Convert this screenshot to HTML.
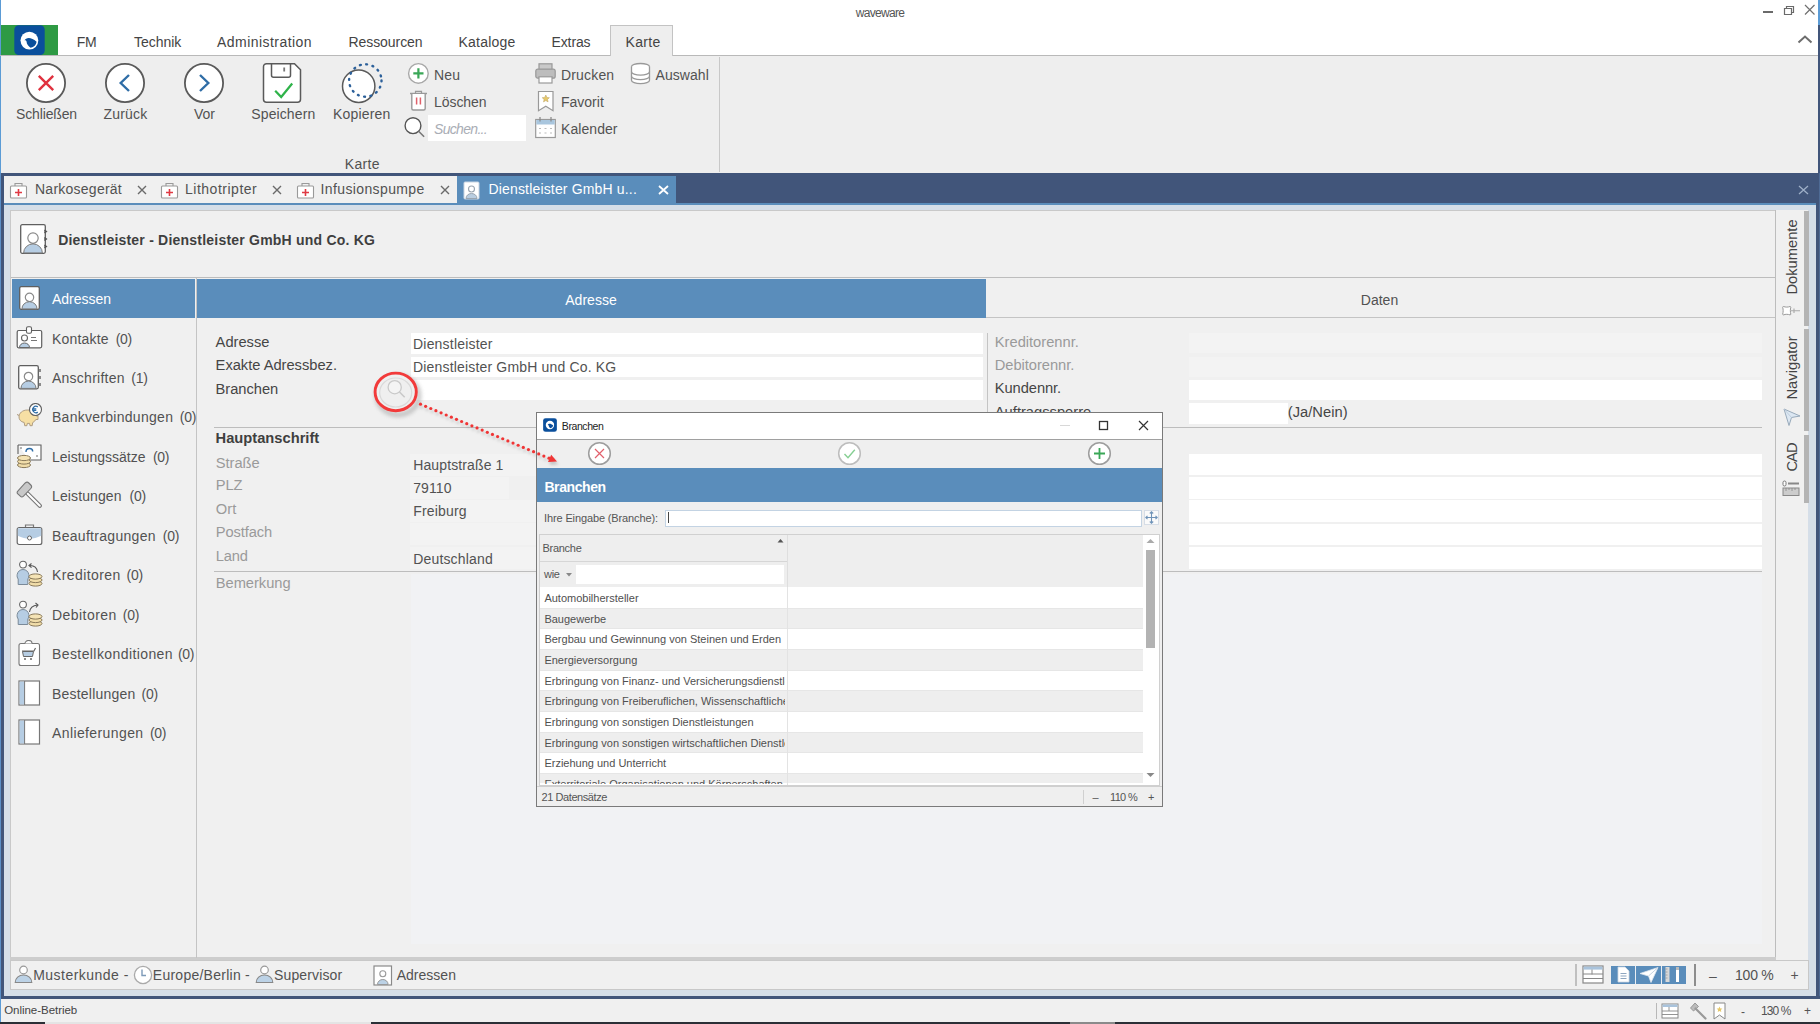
<!DOCTYPE html>
<html><head><meta charset="utf-8"><title>waveware</title>
<style>
html,body{margin:0;padding:0;}
body{width:1820px;height:1024px;overflow:hidden;position:relative;background:#f0f0f0;font-family:"Liberation Sans",sans-serif;}
.a{position:absolute;}
.t{position:absolute;white-space:pre;font-family:"Liberation Sans",sans-serif;}

</style></head><body>
<div class="a" style="left:0px;top:0px;width:1820px;height:55px;background:#ffffff;"></div>
<div class="a" style="left:1818px;top:0px;width:2px;height:25px;background:#5b9bd5;"></div>
<div class="a" style="left:0px;top:0px;width:1px;height:173px;background:#5b9bd5;"></div>
<div class="t" style="left:855.75px;top:6.54px;font-size:12px;line-height:12px;color:#555;letter-spacing:-0.691px;">waveware</div>
<div class="a" style="left:1763px;top:10.5px;width:10px;height:2.5px;background:#6a6a6a;"></div>
<svg class="a" style="left:1782px;top:3px;" width="14" height="13" viewBox="0 0 14 13"><path d="M2.5 5.5h7v6h-7z M4.5 5.5v-2h7v6h-2" fill="none" stroke="#6a6a6a" stroke-width="1.2"/></svg>
<svg class="a" style="left:1803px;top:3px;" width="14" height="13" viewBox="0 0 14 13"><path d="M2 2l9.5 9.5M11.5 2L2 11.5" stroke="#6f6f6f" stroke-width="1.2"/></svg>
<svg class="a" style="left:1796px;top:33px;" width="18" height="12" viewBox="0 0 18 12"><path d="M2.5 9.5L9 3.5l6.5 6" fill="none" stroke="#6d6d6d" stroke-width="2"/></svg>
<div class="a" style="left:1px;top:25px;width:57px;height:30px;background:#2e9a44;"></div>
<svg class="a" style="left:14px;top:25px;" width="31" height="30" viewBox="0 0 31 30"><rect x="0.3" y="0.3" width="30.4" height="29.7" rx="4.5" fill="#0a4f9c"/><circle cx="15.4" cy="15.6" r="8.9" fill="#fff"/><path d="M10.4 15.4C12 12.3 17.2 11.6 22.6 16.8A7.3 7.3 0 0 1 16.6 22.8C14.4 21.3 12.6 19.2 12.6 16.8C12.6 15.6 11.4 15 10.4 15.4Z" fill="#0a4f9c"/></svg>
<div class="t" style="left:76.70px;top:34.55px;font-size:14px;line-height:14px;color:#444;letter-spacing:-0.359px;">FM</div>
<div class="t" style="left:134.00px;top:34.55px;font-size:14px;line-height:14px;color:#444;letter-spacing:-0.038px;">Technik</div>
<div class="t" style="left:217.00px;top:34.55px;font-size:14px;line-height:14px;color:#444;letter-spacing:0.450px;">Administration</div>
<div class="t" style="left:348.50px;top:34.55px;font-size:14px;line-height:14px;color:#444;letter-spacing:-0.070px;">Ressourcen</div>
<div class="t" style="left:458.50px;top:34.55px;font-size:14px;line-height:14px;color:#444;letter-spacing:0.215px;">Kataloge</div>
<div class="t" style="left:551.50px;top:34.55px;font-size:14px;line-height:14px;color:#444;letter-spacing:-0.115px;">Extras</div>
<div class="t" style="left:625.50px;top:34.55px;font-size:14px;line-height:14px;color:#444;letter-spacing:0.306px;">Karte</div>
<div class="a" style="left:0px;top:55px;width:1818px;height:1px;background:#b9b9b9;"></div>
<div class="a" style="left:610px;top:25px;width:63px;height:31px;background:#eeeeee;border:1px solid #c3c3c3;box-sizing:border-box;border-bottom:none;"></div>
<div class="t" style="left:625.50px;top:34.55px;font-size:14px;line-height:14px;color:#444;letter-spacing:0.306px;">Karte</div>
<div class="a" style="left:1px;top:56px;width:1817px;height:117px;background:#eeeeee;"></div>
<div class="a" style="left:719px;top:57px;width:1px;height:115px;background:#c8c8c8;"></div>
<svg class="a" style="left:25px;top:62px;" width="42" height="42" viewBox="0 0 42 42"><circle cx="21" cy="21" r="19.1" fill="#fff" stroke="#5a5a5a" stroke-width="1.8"/><path d="M13.8 13.8l14.4 14.4M28.2 13.8l-14.4 14.4" stroke="#e0323f" stroke-width="2.4"/></svg>
<svg class="a" style="left:104px;top:62px;" width="42" height="42" viewBox="0 0 42 42"><circle cx="21" cy="21" r="19.1" fill="#fff" stroke="#5a5a5a" stroke-width="1.8"/><path d="M25 13l-8.3 8 8.3 8" fill="none" stroke="#2f6da6" stroke-width="2.4"/></svg>
<svg class="a" style="left:183.4px;top:62.3px;" width="42" height="42" viewBox="0 0 42 42"><circle cx="21" cy="21" r="19.1" fill="#fff" stroke="#5a5a5a" stroke-width="1.8"/><path d="M17 13l8.3 8-8.3 8" fill="none" stroke="#2f6da6" stroke-width="2.4"/></svg>
<svg class="a" style="left:262px;top:62px;" width="42" height="42" viewBox="0 0 42 42"><path d="M4.5 1.7h28l6 6v29.5a3 3 0 0 1-3 3h-31a3 3 0 0 1-3-3v-32.5a3 3 0 0 1 3-3z" fill="#fff" stroke="#5a5a5a" stroke-width="1.5"/><path d="M9.5 1.7v11.5a2 2 0 0 0 2 2h15a2 2 0 0 0 2-2v-11.5" fill="none" stroke="#5a5a5a" stroke-width="1.5"/><rect x="21.3" y="5.5" width="1.8" height="4" fill="#777"/><path d="M13.2 28.7l6 6.3 11-13.5" fill="none" stroke="#2fb34a" stroke-width="2.2"/></svg>
<svg class="a" style="left:338px;top:60px;" width="48" height="46" viewBox="0 0 48 46"><circle cx="20.7" cy="26.2" r="16.2" fill="#fff" stroke="#5a5a5a" stroke-width="1.5"/><circle cx="27.3" cy="20.5" r="16.2" fill="none" stroke="#2c609a" stroke-width="2.4" stroke-dasharray="0.9 5.5" stroke-linecap="round"/></svg>
<div class="t" style="left:16.00px;top:107.35px;font-size:14px;line-height:14px;color:#525252;letter-spacing:-0.141px;">Schließen</div>
<div class="t" style="left:103.50px;top:107.35px;font-size:14px;line-height:14px;color:#525252;letter-spacing:0.201px;">Zurück</div>
<div class="t" style="left:194.00px;top:107.35px;font-size:14px;line-height:14px;color:#525252;letter-spacing:-0.005px;">Vor</div>
<div class="t" style="left:251.30px;top:107.35px;font-size:14px;line-height:14px;color:#525252;letter-spacing:0.106px;">Speichern</div>
<div class="t" style="left:333.00px;top:107.35px;font-size:14px;line-height:14px;color:#525252;letter-spacing:0.169px;">Kopieren</div>
<svg class="a" style="left:407px;top:62px;" width="23" height="23" viewBox="0 0 23 23"><circle cx="11.4" cy="11.4" r="9.8" fill="#fff" stroke="#a8a8a8" stroke-width="1.4"/><path d="M11.4 6.3v10.2M6.3 11.4h10.2" stroke="#3aa757" stroke-width="2.2"/></svg>
<div class="t" style="left:434.00px;top:67.65px;font-size:14px;line-height:14px;color:#525252;letter-spacing:0.204px;">Neu</div>
<svg class="a" style="left:407px;top:89px;" width="23" height="23" viewBox="0 0 23 23"><path d="M3 4.5h17" stroke="#999" stroke-width="1.5"/><path d="M8.5 4.3v-2h6v2" fill="none" stroke="#999" stroke-width="1.2"/><path d="M4.8 5v14.5a1.5 1.5 0 0 0 1.5 1.5h10.4a1.5 1.5 0 0 0 1.5-1.5v-14.5" fill="#fff" stroke="#999" stroke-width="1.4"/><path d="M9.6 8.5v7M13.4 8.5v7" stroke="#e0606a" stroke-width="1.5"/></svg>
<div class="t" style="left:434.00px;top:95.15px;font-size:14px;line-height:14px;color:#525252;letter-spacing:-0.062px;">Löschen</div>
<svg class="a" style="left:403px;top:116px;" width="24" height="24" viewBox="0 0 24 24"><circle cx="10" cy="9.7" r="7.9" fill="#fff" stroke="#555" stroke-width="1.4"/><path d="M15.6 15.3l5.5 5.4" stroke="#777" stroke-width="1.6"/></svg>
<div class="a" style="left:428px;top:115px;width:98px;height:26px;background:#ffffff;"></div>
<div class="t" style="left:434.00px;top:121.75px;font-size:14px;line-height:14px;color:#a9adb5;font-style:italic;letter-spacing:-0.684px;">Suchen...</div>
<svg class="a" style="left:534px;top:62px;" width="23" height="23" viewBox="0 0 23 23"><rect x="5" y="1.8" width="13" height="6" fill="#c9c9c9" stroke="#999" stroke-width="1.2"/><rect x="1.8" y="7.2" width="19.4" height="9" rx="2" fill="#bdbdbd" stroke="#999" stroke-width="1.2"/><rect x="5" y="14.8" width="13" height="6.2" fill="#fff" stroke="#999" stroke-width="1.2"/></svg>
<div class="t" style="left:561.00px;top:67.55px;font-size:14px;line-height:14px;color:#525252;letter-spacing:0.166px;">Drucken</div>
<svg class="a" style="left:536px;top:90px;" width="20" height="23" viewBox="0 0 20 23"><path d="M2.5 1.5h14.5v19.2l-7.2-4.5-7.3 4.5z" fill="#fff" stroke="#999" stroke-width="1.2"/><path d="M9.8 5l1.1 2.4 2.5.3-1.9 1.7.6 2.5-2.3-1.3-2.3 1.3.6-2.5-1.9-1.7 2.5-.3z" fill="#e6c86a" stroke="#bba060" stroke-width=".5"/></svg>
<div class="t" style="left:561.00px;top:94.55px;font-size:14px;line-height:14px;color:#525252;">Favorit</div>
<svg class="a" style="left:534px;top:116px;" width="23" height="23" viewBox="0 0 23 23"><rect x="1.7" y="3.5" width="19.6" height="18" fill="#fff" stroke="#999" stroke-width="1.2"/><rect x="2.3" y="4" width="18.4" height="4.5" fill="#a9c6de"/><path d="M6 1v4.5M17 1v4.5" stroke="#888" stroke-width="1.2"/><path d="M5 12.5h2M10.5 12.5h2M16 12.5h2M5 17h2M10.5 17h2M16 17h2" stroke="#bbb" stroke-width="1.2"/></svg>
<div class="t" style="left:561.00px;top:121.75px;font-size:14px;line-height:14px;color:#525252;letter-spacing:0.069px;">Kalender</div>
<svg class="a" style="left:629px;top:62px;" width="23" height="23" viewBox="0 0 23 23"><ellipse cx="11.5" cy="4.8" rx="9" ry="3.3" fill="#fff" stroke="#999" stroke-width="1.3"/><path d="M2.5 4.8v13.5c0 1.8 4 3.3 9 3.3s9-1.5 9-3.3v-13.5" fill="#fff" stroke="#999" stroke-width="1.3"/><path d="M2.5 9.8c0 1.8 4 3.3 9 3.3s9-1.5 9-3.3M2.5 14.3c0 1.8 4 3.3 9 3.3s9-1.5 9-3.3" fill="none" stroke="#999" stroke-width="1.3"/></svg>
<div class="t" style="left:655.50px;top:67.55px;font-size:14px;line-height:14px;color:#525252;letter-spacing:0.054px;">Auswahl</div>
<div class="t" style="left:344.80px;top:157.15px;font-size:14px;line-height:14px;color:#525252;letter-spacing:0.306px;">Karte</div>
<div class="a" style="left:1px;top:173px;width:1817px;height:30px;background:#41557a;"></div>
<div class="a" style="left:4px;top:176px;width:453px;height:27px;background:#f0f0f0;"></div>
<div class="a" style="left:457px;top:176px;width:219px;height:27px;background:#5a8dbb;"></div>
<div class="a" style="left:4px;top:203px;width:1812px;height:2px;background:#5a8dbb;"></div>
<div class="a" style="left:1px;top:173px;width:3px;height:826px;background:#41557a;"></div>
<div class="a" style="left:0px;top:173px;width:1px;height:826px;background:#5b8fc8;"></div>
<div class="a" style="left:1818px;top:25px;width:2px;height:148px;background:#41557a;"></div>
<div class="a" style="left:1816px;top:173px;width:4px;height:826px;background:#41557a;"></div>
<div class="a" style="left:1819px;top:173px;width:1px;height:826px;background:#4e6a94;"></div>
<div class="a" style="left:4px;top:205px;width:1812px;height:5px;background:#d5dee8;"></div>
<div class="a" style="left:4px;top:205px;width:6px;height:791px;background:#d5dee8;"></div>
<div class="a" style="left:1808px;top:205px;width:8px;height:791px;background:#d5dee8;"></div>
<div class="a" style="left:4px;top:989px;width:1812px;height:7px;background:#d5dee8;"></div>
<div class="a" style="left:1px;top:996px;width:1819px;height:3px;background:#41557a;"></div>
<svg class="a" style="left:8.5px;top:181px;" width="19" height="18" viewBox="0 0 19 18"><rect x="1.5" y="5" width="16" height="12" rx="1" fill="#fff" stroke="#9a9a9a" stroke-width="1.1"/><path d="M6 5v-2.5h7v2.5" fill="none" stroke="#9a9a9a" stroke-width="1.1"/><path d="M9.5 8v7M6 11.5h7" stroke="#e03a44" stroke-width="1.6"/></svg>
<div class="t" style="left:35.00px;top:181.75px;font-size:14px;line-height:14px;color:#525252;letter-spacing:0.246px;">Narkosegerät</div>
<svg class="a" style="left:136.5px;top:184.5px;" width="10" height="10" viewBox="0 0 10 10"><path d="M1 1l8 8M9 1l-8 8" stroke="#6a6a6a" stroke-width="1.4"/></svg>
<svg class="a" style="left:159.5px;top:181px;" width="19" height="18" viewBox="0 0 19 18"><rect x="1.5" y="5" width="16" height="12" rx="1" fill="#fff" stroke="#9a9a9a" stroke-width="1.1"/><path d="M6 5v-2.5h7v2.5" fill="none" stroke="#9a9a9a" stroke-width="1.1"/><path d="M9.5 8v7M6 11.5h7" stroke="#e03a44" stroke-width="1.6"/></svg>
<div class="t" style="left:185.00px;top:181.75px;font-size:14px;line-height:14px;color:#525252;letter-spacing:0.512px;">Lithotripter</div>
<svg class="a" style="left:272px;top:184.5px;" width="10" height="10" viewBox="0 0 10 10"><path d="M1 1l8 8M9 1l-8 8" stroke="#6a6a6a" stroke-width="1.4"/></svg>
<svg class="a" style="left:295.5px;top:181px;" width="19" height="18" viewBox="0 0 19 18"><rect x="1.5" y="5" width="16" height="12" rx="1" fill="#fff" stroke="#9a9a9a" stroke-width="1.1"/><path d="M6 5v-2.5h7v2.5" fill="none" stroke="#9a9a9a" stroke-width="1.1"/><path d="M9.5 8v7M6 11.5h7" stroke="#e03a44" stroke-width="1.6"/></svg>
<div class="t" style="left:320.50px;top:181.75px;font-size:14px;line-height:14px;color:#525252;letter-spacing:0.383px;">Infusionspumpe</div>
<svg class="a" style="left:439.7px;top:184.5px;" width="10" height="10" viewBox="0 0 10 10"><path d="M1 1l8 8M9 1l-8 8" stroke="#6a6a6a" stroke-width="1.4"/></svg>
<svg class="a" style="left:463px;top:181px;" width="17" height="19" viewBox="0 0 17 19"><rect x="1" y="1" width="15" height="17" rx="1" fill="#fff" stroke="#c9d5e2" stroke-width="1"/><circle cx="8.5" cy="8" r="3" fill="none" stroke="#9aa5b0" stroke-width="1.1"/><path d="M3 17.5c0-3 2.5-5 5.5-5s5.5 2 5.5 5z" fill="#b9cde0" stroke="#9aa5b0" stroke-width="1"/></svg>
<div class="t" style="left:488.50px;top:181.75px;font-size:14px;line-height:14px;color:#ffffff;letter-spacing:0.164px;">Dienstleister GmbH u...</div>
<svg class="a" style="left:658px;top:184.5px;" width="11" height="10" viewBox="0 0 11 10"><path d="M1 1l9 8M10 1l-9 8" stroke="#ffffff" stroke-width="1.8"/></svg>
<svg class="a" style="left:1798px;top:184.5px;" width="11" height="10" viewBox="0 0 11 10"><path d="M1 1l9 8M10 1l-9 8" stroke="#9fb0c8" stroke-width="1.3"/></svg>
<div class="a" style="left:10px;top:210px;width:1766px;height:748px;background:#f0f0f0;"></div>
<div class="a" style="left:10px;top:210px;width:1px;height:748px;background:#c9c9c9;"></div>
<div class="a" style="left:10px;top:210px;width:1766px;height:1px;background:#c9c9c9;"></div>
<div class="a" style="left:1775px;top:210px;width:1px;height:748px;background:#bdbdbd;"></div>
<div class="a" style="left:10px;top:957px;width:1766px;height:3px;background:#cdcdcd;"></div>
<div class="a" style="left:1776px;top:210px;width:32px;height:750px;background:#f0f0f0;"></div>
<svg class="a" style="left:19.5px;top:224px;" width="26" height="30" viewBox="0 0 26 30"><rect x="0.7" y="0.7" width="24.6" height="28.6" rx="1.5" fill="#fff" stroke="#5f5f5f" stroke-width="1.3"/><circle cx="13.0" cy="14.1" r="5.2" fill="#fff" stroke="#8a8a8a" stroke-width="1.2"/><path d="M3.6400000000000006 28.9a9.36 9.0 0 0 1 18.72 0z" fill="#b6cde3" stroke="#7a7a7a" stroke-width="1"/></svg>
<svg class="a" style="left:44px;top:226px;" width="4" height="26" viewBox="0 0 4 26"><path d="M0.5 4l2 1.5-2 1.5M0.5 11.5l2 1.5-2 1.5M0.5 19l2 1.5-2 1.5" fill="#555" stroke="#555" stroke-width="1.2"/></svg>
<div class="t" style="left:58.20px;top:232.75px;font-size:14px;line-height:14px;color:#3f3f3f;font-weight:700;letter-spacing:0.216px;">Dienstleister - Dienstleister GmbH und Co. KG</div>
<div class="a" style="left:11px;top:277px;width:1764px;height:1px;background:#bdbdbd;"></div>
<div class="a" style="left:12px;top:279px;width:183px;height:39px;background:#5a8dbb;"></div>
<div class="a" style="left:196px;top:278px;width:1px;height:680px;background:#c4c4c4;"></div>
<svg class="a" style="left:18.5px;top:286px;" width="21" height="24" viewBox="0 0 21 24"><rect x="0.7" y="0.7" width="19.6" height="22.6" rx="1.5" fill="#fff" stroke="#5f5f5f" stroke-width="1.3"/><circle cx="10.5" cy="11.28" r="4.2" fill="#fff" stroke="#8a8a8a" stroke-width="1.2"/><path d="M2.9400000000000004 22.9a7.56 7.199999999999999 0 0 1 15.12 0z" fill="#b6cde3" stroke="#7a7a7a" stroke-width="1"/></svg>
<div class="t" style="left:52.00px;top:292.05px;font-size:14px;line-height:14px;color:#ffffff;letter-spacing:-0.020px;">Adressen</div>
<div class="t" style="left:52.00px;top:331.55px;font-size:14px;line-height:14px;color:#525252;letter-spacing:0.179px;">Kontakte</div>
<div class="t" style="left:115.70px;top:331.55px;font-size:14px;line-height:14px;color:#525252;letter-spacing:-0.308px;">(0)</div>
<div class="t" style="left:52.00px;top:371.00px;font-size:14px;line-height:14px;color:#525252;letter-spacing:0.250px;">Anschriften</div>
<div class="t" style="left:131.30px;top:371.00px;font-size:14px;line-height:14px;color:#525252;letter-spacing:-0.308px;">(1)</div>
<div class="t" style="left:52.00px;top:410.45px;font-size:14px;line-height:14px;color:#525252;letter-spacing:0.277px;">Bankverbindungen</div>
<div class="t" style="left:179.80px;top:410.45px;font-size:14px;line-height:14px;color:#525252;letter-spacing:-0.308px;">(0)</div>
<div class="t" style="left:52.00px;top:449.90px;font-size:14px;line-height:14px;color:#525252;letter-spacing:0.007px;">Leistungssätze</div>
<div class="t" style="left:152.90px;top:449.90px;font-size:14px;line-height:14px;color:#525252;letter-spacing:-0.308px;">(0)</div>
<div class="t" style="left:52.00px;top:489.35px;font-size:14px;line-height:14px;color:#525252;letter-spacing:0.118px;">Leistungen</div>
<div class="t" style="left:129.60px;top:489.35px;font-size:14px;line-height:14px;color:#525252;letter-spacing:-0.308px;">(0)</div>
<div class="t" style="left:52.00px;top:528.80px;font-size:14px;line-height:14px;color:#525252;letter-spacing:0.297px;">Beauftragungen</div>
<div class="t" style="left:162.80px;top:528.80px;font-size:14px;line-height:14px;color:#525252;letter-spacing:-0.308px;">(0)</div>
<div class="t" style="left:52.00px;top:568.25px;font-size:14px;line-height:14px;color:#525252;letter-spacing:0.411px;">Kreditoren</div>
<div class="t" style="left:126.60px;top:568.25px;font-size:14px;line-height:14px;color:#525252;letter-spacing:-0.308px;">(0)</div>
<div class="t" style="left:52.00px;top:607.70px;font-size:14px;line-height:14px;color:#525252;letter-spacing:0.444px;">Debitoren</div>
<div class="t" style="left:122.80px;top:607.70px;font-size:14px;line-height:14px;color:#525252;letter-spacing:-0.308px;">(0)</div>
<div class="t" style="left:52.00px;top:647.15px;font-size:14px;line-height:14px;color:#525252;letter-spacing:0.409px;">Bestellkonditionen</div>
<div class="t" style="left:178.00px;top:647.15px;font-size:14px;line-height:14px;color:#525252;letter-spacing:-0.308px;">(0)</div>
<div class="t" style="left:52.00px;top:686.60px;font-size:14px;line-height:14px;color:#525252;letter-spacing:0.204px;">Bestellungen</div>
<div class="t" style="left:141.60px;top:686.60px;font-size:14px;line-height:14px;color:#525252;letter-spacing:-0.308px;">(0)</div>
<div class="t" style="left:52.00px;top:726.05px;font-size:14px;line-height:14px;color:#525252;letter-spacing:0.392px;">Anlieferungen</div>
<div class="t" style="left:150.00px;top:726.05px;font-size:14px;line-height:14px;color:#525252;letter-spacing:-0.308px;">(0)</div>
<svg class="a" style="left:16px;top:326px;" width="27" height="23" viewBox="0 0 27 23"><rect x="1.2" y="4.5" width="24.5" height="17.3" rx="1.5" fill="#fff" stroke="#5f5f5f" stroke-width="1.2"/><rect x="10.5" y="0.8" width="5" height="6.5" rx="1.5" fill="#fff" stroke="#5f5f5f" stroke-width="1.1"/><circle cx="8.5" cy="12" r="3" fill="#fff" stroke="#666" stroke-width="1.1"/><path d="M3.5 21.5a5 4.5 0 0 1 10 0z" fill="#b6cde3" stroke="#666" stroke-width="1"/><path d="M15 11.5h5M15 14.5h6" stroke="#777" stroke-width="1.2"/></svg>
<svg class="a" style="left:18.3px;top:365px;" width="21" height="24.5" viewBox="0 0 21 24.5"><rect x="0.7" y="0.7" width="19.6" height="23.1" rx="1.5" fill="#fff" stroke="#5f5f5f" stroke-width="1.3"/><circle cx="10.5" cy="11.514999999999999" r="4.2" fill="#fff" stroke="#8a8a8a" stroke-width="1.2"/><path d="M2.9400000000000004 23.4a7.56 7.35 0 0 1 15.12 0z" fill="#b6cde3" stroke="#7a7a7a" stroke-width="1"/></svg>
<svg class="a" style="left:39px;top:367px;" width="3" height="22" viewBox="0 0 3 22"><path d="M1 2v3M1 9v3M1 16v3" stroke="#555" stroke-width="1.3"/></svg>
<svg class="a" style="left:16px;top:403px;" width="27" height="26" viewBox="0 0 27 26"><path d="M3 14c0-4 3.5-7 8.5-7 1 0 2 .1 3 .4l2.5-2.2.3 3.3c1.6 1.2 2.7 2.8 2.9 4.5h1.8v3.5h-2.2c-.7 1.4-1.8 2.5-3.2 3.2l-.4 3h-2.2l-.4-2.3c-.8.1-1.5.1-2.3 0l-.4 2.3h-2.2l-.5-3.2C4.6 18.8 3 16.5 3 14z" fill="#f6dfa4" stroke="#a8957a" stroke-width=".9"/><path d="M3.2 12.5l-2.2-1" stroke="#a8957a" stroke-width="1"/><circle cx="19.5" cy="6.5" r="6" fill="#fff" stroke="#5f5f5f" stroke-width="1.1"/><path d="M21.8 3.9a3.2 3.2 0 1 0 0 5.2M16.3 5.8h4M16.3 7.3h4" fill="none" stroke="#2f6da6" stroke-width="1.3"/></svg>
<svg class="a" style="left:16px;top:443px;" width="27" height="27" viewBox="0 0 27 27"><path d="M2 2h23v15h-12" fill="#fff" stroke="#5f5f5f" stroke-width="1.1"/><path d="M2 2v9" stroke="#5f5f5f" stroke-width="1.1"/><path d="M10 9c0-2.2 1.7-3.5 3.5-3.5s3.2 1.2 3.2 3" fill="none" stroke="#2f6da6" stroke-width="1.4"/><circle cx="5" cy="5" r=".8" fill="#555"/><circle cx="21" cy="13" r=".8" fill="#555"/><ellipse cx="8" cy="22" rx="6.5" ry="2.6" fill="#f0dca8" stroke="#8a7a5a" stroke-width="1"/><ellipse cx="8" cy="18.5" rx="6.5" ry="2.6" fill="#f0dca8" stroke="#8a7a5a" stroke-width="1"/><ellipse cx="8" cy="15" rx="6.5" ry="2.6" fill="#f4e3b5" stroke="#8a7a5a" stroke-width="1"/></svg>
<svg class="a" style="left:16px;top:481px;" width="27" height="27" viewBox="0 0 27 27"><path d="M11.5 12.5l12.3 12.3" stroke="#777" stroke-width="4.2" stroke-linecap="round"/><path d="M11.5 12.5l12.3 12.3" stroke="#fff" stroke-width="2" stroke-linecap="round"/><path d="M1.8 10.2L9.2 2c1.2-1 2.6-1 3.6 0l2 2c1 1 1 2.4 0 3.5L7.5 15.2c-1 .9-2.3.9-3.2 0l-2.5-2.3c-.9-.8-.9-2 0-2.7z" fill="#c8c8c8" stroke="#777" stroke-width="1.1"/></svg>
<svg class="a" style="left:16px;top:523px;" width="27" height="23" viewBox="0 0 27 23"><path d="M9.5 4.5v-2.5h8v2.5" fill="none" stroke="#777" stroke-width="1.2"/><rect x="1.2" y="4.5" width="24.6" height="17" rx="2" fill="#fff" stroke="#666" stroke-width="1.2"/><path d="M1.8 5.2h23.4v7.5c-4 2-8 3-11.7 3s-7.7-1-11.7-3z" fill="#b6cde3"/><circle cx="13.5" cy="15" r="2" fill="#fff" stroke="#666" stroke-width="1"/></svg>
<svg class="a" style="left:16px;top:560px;" width="27" height="27" viewBox="0 0 27 27"><circle cx="7" cy="4.6" r="3.4" fill="#fff" stroke="#666" stroke-width="1.1"/><path d="M2.2 24.5v-5.5c-1-1.2-1.3-2.8-1-4.5.5-3 2.8-5 5.8-5s5.3 2 5.8 5c.3 1.7 0 3.3-1 4.5v5.5z" fill="#b6cde3" stroke="#7a8a99" stroke-width="1"/><ellipse cx="19.5" cy="23.5" rx="6.5" ry="2.6" fill="#f0dca8" stroke="#8a7a5a" stroke-width="1"/><ellipse cx="19.5" cy="20.0" rx="6.5" ry="2.6" fill="#f0dca8" stroke="#8a7a5a" stroke-width="1"/><ellipse cx="19.5" cy="16.5" rx="6.5" ry="2.6" fill="#f4e3b5" stroke="#8a7a5a" stroke-width="1"/><path d="M21.5 12c-.5-4-3.5-6.5-7.5-6.5" fill="none" stroke="#555" stroke-width="1.1"/><path d="M15.5 3.5l-2.5 2 2.5 2.2" fill="none" stroke="#555" stroke-width="1.1"/></svg>
<svg class="a" style="left:16px;top:600px;" width="27" height="27" viewBox="0 0 27 27"><circle cx="7" cy="4.6" r="3.4" fill="#fff" stroke="#666" stroke-width="1.1"/><path d="M2.2 24.5v-5.5c-1-1.2-1.3-2.8-1-4.5.5-3 2.8-5 5.8-5s5.3 2 5.8 5c.3 1.7 0 3.3-1 4.5v5.5z" fill="#b6cde3" stroke="#7a8a99" stroke-width="1"/><ellipse cx="19.5" cy="23.5" rx="6.5" ry="2.6" fill="#f0dca8" stroke="#8a7a5a" stroke-width="1"/><ellipse cx="19.5" cy="20.0" rx="6.5" ry="2.6" fill="#f0dca8" stroke="#8a7a5a" stroke-width="1"/><ellipse cx="19.5" cy="16.5" rx="6.5" ry="2.6" fill="#f4e3b5" stroke="#8a7a5a" stroke-width="1"/><path d="M13.5 12c.5-4 3.5-6.5 8-7" fill="none" stroke="#555" stroke-width="1.1"/><path d="M19.5 3l2.5 2-2 2.5" fill="none" stroke="#555" stroke-width="1.1"/></svg>
<svg class="a" style="left:17px;top:640px;" width="24" height="27" viewBox="0 0 24 27"><rect x="2" y="3.5" width="20.5" height="22" rx="2" fill="#fff" stroke="#777" stroke-width="1.1"/><path d="M8 3.5c0-1.8 1.7-3 3.5-3s3.5 1.2 3.5 3" fill="#fff" stroke="#777" stroke-width="1.1"/><path d="M5 11h12l1.5-3" fill="none" stroke="#666" stroke-width="1.2"/><path d="M5.5 11.5h11l-1 5h-9z" fill="#b6cde3" stroke="#666" stroke-width="1"/><circle cx="8" cy="19" r="1" fill="#666"/><circle cx="14" cy="19" r="1" fill="#666"/></svg>
<svg class="a" style="left:18px;top:679.5px;" width="23" height="26" viewBox="0 0 23 26"><rect x="1" y="1" width="20.5" height="24" fill="#fff" stroke="#777" stroke-width="1.2"/><rect x="1.6" y="1.6" width="5" height="22.8" fill="#b6cde3"/><path d="M6.6 1v24" stroke="#777" stroke-width="1"/></svg>
<svg class="a" style="left:18px;top:718.5px;" width="23" height="26" viewBox="0 0 23 26"><rect x="1" y="1" width="20.5" height="24" fill="#fff" stroke="#777" stroke-width="1.2"/><rect x="1.6" y="1.6" width="5" height="22.8" fill="#b6cde3"/><path d="M6.6 1v24" stroke="#777" stroke-width="1"/></svg>
<div class="a" style="left:197px;top:279px;width:789px;height:39px;background:#5a8dbb;"></div>
<div class="t" style="left:565.25px;top:292.85px;font-size:14px;line-height:14px;color:#ffffff;letter-spacing:0.020px;">Adresse</div>
<div class="a" style="left:986px;top:317px;width:789px;height:1px;background:#c4c4c4;"></div>
<div class="t" style="left:1360.75px;top:292.85px;font-size:14px;line-height:14px;color:#525252;letter-spacing:0.028px;">Daten</div>
<div class="t" style="left:215.60px;top:334.66px;font-size:14.7px;line-height:14.7px;color:#454545;letter-spacing:-0.013px;">Adresse</div>
<div class="t" style="left:215.60px;top:357.96px;font-size:14.7px;line-height:14.7px;color:#454545;letter-spacing:-0.015px;">Exakte Adressbez.</div>
<div class="t" style="left:215.60px;top:381.96px;font-size:14.7px;line-height:14.7px;color:#454545;letter-spacing:-0.034px;">Branchen</div>
<div class="a" style="left:410.5px;top:333px;width:572.5px;height:20.5px;background:#ffffff;"></div>
<div class="a" style="left:410.5px;top:356.5px;width:572.5px;height:20.5px;background:#ffffff;"></div>
<div class="a" style="left:410.5px;top:380px;width:572.5px;height:20px;background:#ffffff;"></div>
<div class="t" style="left:413.00px;top:336.55px;font-size:14px;line-height:14px;color:#525252;letter-spacing:0.205px;">Dienstleister</div>
<div class="t" style="left:413.00px;top:359.65px;font-size:14px;line-height:14px;color:#525252;letter-spacing:0.172px;">Dienstleister GmbH und Co. KG</div>
<div class="a" style="left:987px;top:333px;width:1px;height:93px;background:#c4c4c4;"></div>
<div class="a" style="left:213.5px;top:427px;width:1548px;height:1px;background:#bdbdbd;"></div>
<div class="t" style="left:215.60px;top:430.56px;font-size:14.7px;line-height:14.7px;color:#3f3f3f;font-weight:700;">Hauptanschrift</div>
<div class="t" style="left:215.80px;top:455.86px;font-size:14.7px;line-height:14.7px;color:#9a9a9a;letter-spacing:-0.030px;">Straße</div>
<div class="t" style="left:215.80px;top:477.96px;font-size:14.7px;line-height:14.7px;color:#9a9a9a;letter-spacing:-0.079px;">PLZ</div>
<div class="t" style="left:215.80px;top:502.36px;font-size:14.7px;line-height:14.7px;color:#9a9a9a;letter-spacing:0.098px;">Ort</div>
<div class="t" style="left:215.80px;top:525.46px;font-size:14.7px;line-height:14.7px;color:#9a9a9a;letter-spacing:-0.107px;">Postfach</div>
<div class="t" style="left:215.80px;top:549.16px;font-size:14.7px;line-height:14.7px;color:#9a9a9a;letter-spacing:-0.172px;">Land</div>
<div class="a" style="left:410px;top:454px;width:572px;height:21.5px;background:#f3f3f3;"></div>
<div class="a" style="left:410px;top:477px;width:99px;height:21.5px;background:#f3f3f3;"></div>
<div class="a" style="left:410px;top:499.5px;width:572px;height:22px;background:#f3f3f3;"></div>
<div class="a" style="left:410px;top:523px;width:572px;height:22px;background:#f3f3f3;"></div>
<div class="a" style="left:410px;top:546.5px;width:572px;height:22px;background:#f3f3f3;"></div>
<div class="t" style="left:413.20px;top:457.85px;font-size:14px;line-height:14px;color:#525252;letter-spacing:0.122px;">Hauptstraße 1</div>
<div class="t" style="left:413.20px;top:480.55px;font-size:14px;line-height:14px;color:#525252;letter-spacing:0.119px;">79110</div>
<div class="t" style="left:413.20px;top:503.85px;font-size:14px;line-height:14px;color:#525252;letter-spacing:0.170px;">Freiburg</div>
<div class="t" style="left:413.20px;top:551.75px;font-size:14px;line-height:14px;color:#525252;letter-spacing:0.170px;">Deutschland</div>
<div class="a" style="left:213.5px;top:571px;width:1548px;height:1px;background:#bdbdbd;"></div>
<div class="t" style="left:215.80px;top:575.86px;font-size:14.7px;line-height:14.7px;color:#9a9a9a;letter-spacing:-0.045px;">Bemerkung</div>
<div class="a" style="left:411px;top:574px;width:1351px;height:370px;background:#f1f2f4;"></div>
<div class="t" style="left:994.80px;top:334.66px;font-size:14.7px;line-height:14.7px;color:#9a9a9a;letter-spacing:-0.008px;">Kreditorennr.</div>
<div class="t" style="left:994.80px;top:357.96px;font-size:14.7px;line-height:14.7px;color:#9a9a9a;letter-spacing:-0.051px;">Debitorennr.</div>
<div class="t" style="left:994.80px;top:381.36px;font-size:14.7px;line-height:14.7px;color:#454545;letter-spacing:-0.074px;">Kundennr.</div>
<div class="t" style="left:994.80px;top:404.76px;font-size:14.7px;line-height:14.7px;color:#454545;letter-spacing:0.011px;">Auftragssperre</div>
<div class="a" style="left:1188.5px;top:333px;width:573.5px;height:20px;background:#f3f3f3;"></div>
<div class="a" style="left:1188.5px;top:356.5px;width:573.5px;height:20.5px;background:#f3f3f3;"></div>
<div class="a" style="left:1188.5px;top:379.5px;width:573.5px;height:20.5px;background:#ffffff;"></div>
<div class="a" style="left:1188.5px;top:403px;width:99px;height:21px;background:#ffffff;"></div>
<div class="t" style="left:1287.80px;top:404.96px;font-size:14.7px;line-height:14.7px;color:#454545;letter-spacing:0.023px;">(Ja/Nein)</div>
<div class="a" style="left:1188.5px;top:453.5px;width:573.5px;height:21.5px;background:#ffffff;"></div>
<div class="a" style="left:1188.5px;top:477px;width:573.5px;height:21.5px;background:#ffffff;"></div>
<div class="a" style="left:1188.5px;top:500px;width:573.5px;height:21.5px;background:#ffffff;"></div>
<div class="a" style="left:1188.5px;top:523.5px;width:573.5px;height:21.5px;background:#ffffff;"></div>
<div class="a" style="left:1188.5px;top:547px;width:573.5px;height:21.5px;background:#ffffff;"></div>
<div class="t" style="left:1732px;top:248.5px;width:120px;height:16px;font-size:14.7px;line-height:16px;letter-spacing:0px;text-indent:0px;color:#444;text-align:center;transform:rotate(-90deg);">Dokumente</div>
<div class="t" style="left:1732px;top:360.3px;width:120px;height:16px;font-size:14.7px;line-height:16px;letter-spacing:0.04px;text-indent:0.04px;color:#444;text-align:center;transform:rotate(-90deg);">Navigator</div>
<div class="t" style="left:1732px;top:449.2px;width:120px;height:16px;font-size:14.7px;line-height:16px;letter-spacing:-1px;text-indent:-1px;color:#444;text-align:center;transform:rotate(-90deg);">CAD</div>
<div class="a" style="left:1804px;top:211px;width:5px;height:115px;background:#b4b4b4;"></div>
<div class="a" style="left:1804px;top:329px;width:5px;height:102px;background:#b4b4b4;"></div>
<div class="a" style="left:1804px;top:435px;width:5px;height:68px;background:#b4b4b4;"></div>
<svg class="a" style="left:1781px;top:304px;" width="22" height="14" viewBox="0 0 22 14"><path d="M2.5 2.5c2 .8 4.5.8 6.5 0 .5 0 .8.3.8.8-.6 2.2-.6 4.6 0 6.8 0 .5-.3.8-.8.8-2-.8-4.5-.8-6.5 0-.5 0-.8-.3-.8-.8.6-2.2.6-4.6 0-6.8 0-.5.3-.8.8-.8z" fill="#fff" stroke="#999" stroke-width="1"/><path d="M10 6.7h9M13 4.5v4.5" stroke="#aaa" stroke-width="1.1"/></svg>
<svg class="a" style="left:1781px;top:405px;" width="22" height="22" viewBox="0 0 22 22"><path d="M3 4L19 11l-8.5 1.5L8 20.5z" fill="#dce7f2" stroke="#98aabb" stroke-width="1"/><path d="M3 4l7.5 8.5" stroke="#b9c9d9" stroke-width=".8"/></svg>
<svg class="a" style="left:1782px;top:479px;" width="18" height="18" viewBox="0 0 18 18"><rect x="1" y="9" width="16" height="7.5" fill="#ccc" stroke="#888" stroke-width="1"/><path d="M4 9v3M7 9v2M10 9v3M13 9v2" stroke="#888" stroke-width=".8"/><rect x="1" y="2" width="3" height="5" rx="1.5" fill="#fff" stroke="#777" stroke-width="1"/><path d="M6 4.5h9l2 0" stroke="#888" stroke-width="2"/></svg>
<div class="a" style="left:10px;top:960px;width:1799px;height:29.5px;background:#f0f0f0;border:1px solid #c8c8c8;box-sizing:border-box;"></div>
<svg class="a" style="left:13.5px;top:965px;" width="19" height="19" viewBox="0 0 19 19"><circle cx="9.5" cy="5" r="3.8" fill="#fff" stroke="#9a9a9a" stroke-width="1.2"/><path d="M1.2 17.5a8.3 7.5 0 0 1 16.6 0z" fill="#bcd2e6" stroke="#888" stroke-width="1.1"/></svg>
<div class="t" style="left:33.20px;top:968.45px;font-size:14px;line-height:14px;color:#525252;letter-spacing:0.470px;">Musterkunde -</div>
<svg class="a" style="left:132.5px;top:965px;" width="20" height="20" viewBox="0 0 20 20"><circle cx="10" cy="10" r="8.6" fill="#fff" stroke="#aaa" stroke-width="1.3"/><path d="M9 4.5v6h4" fill="none" stroke="#7d9ab8" stroke-width="1.4"/></svg>
<div class="t" style="left:152.80px;top:968.45px;font-size:14px;line-height:14px;color:#525252;letter-spacing:0.254px;">Europe/Berlin -</div>
<svg class="a" style="left:254.8px;top:965px;" width="19" height="19" viewBox="0 0 19 19"><circle cx="9.5" cy="5" r="3.8" fill="#fff" stroke="#9a9a9a" stroke-width="1.2"/><path d="M1.2 17.5a8.3 7.5 0 0 1 16.6 0z" fill="#bcd2e6" stroke="#888" stroke-width="1.1"/></svg>
<div class="t" style="left:274.00px;top:968.45px;font-size:14px;line-height:14px;color:#525252;letter-spacing:0.138px;">Supervisor</div>
<svg class="a" style="left:373px;top:965px;" width="20" height="21" viewBox="0 0 20 21"><rect x="1" y="1" width="17.5" height="19" fill="#fff" stroke="#8a8a8a" stroke-width="1.2"/><circle cx="9.8" cy="8.8" r="3" fill="none" stroke="#999" stroke-width="1.1"/><path d="M4.5 19.5a5.3 5 0 0 1 10.6 0z" fill="#bcd2e6" stroke="#999" stroke-width="1"/></svg>
<div class="t" style="left:396.70px;top:968.45px;font-size:14px;line-height:14px;color:#525252;letter-spacing:0.018px;">Adressen</div>
<div class="a" style="left:1575px;top:964px;width:2px;height:22px;background:#c0c0c0;"></div>
<svg class="a" style="left:1582px;top:965px;" width="22" height="19" viewBox="0 0 22 19"><rect x="1" y="1" width="20" height="17" fill="#fff" stroke="#888" stroke-width="1.2"/><rect x="1.6" y="1.6" width="18.8" height="3" fill="#a9c3dc"/><path d="M1 9h20M1 13.5h20M10 4.5v5" stroke="#888" stroke-width="1"/></svg>
<div class="a" style="left:1610.5px;top:965.5px;width:75.5px;height:18px;background:#5a8dbb;"></div>
<div class="a" style="left:1635px;top:965.5px;width:1px;height:18px;background:#eaeef3;"></div>
<div class="a" style="left:1661.3px;top:965.5px;width:1px;height:18px;background:#eaeef3;"></div>
<svg class="a" style="left:1616px;top:966px;" width="15" height="17" viewBox="0 0 15 17"><path d="M2 1h7l4 4v11h-11z" fill="#fff" stroke="#cfd8e2" stroke-width=".8"/><path d="M4.5 7.5h6M4.5 10h6M4.5 12.5h6" stroke="#8ea6bf" stroke-width="1.2"/></svg>
<svg class="a" style="left:1638px;top:966px;" width="22" height="17" viewBox="0 0 22 17"><path d="M2 7.5l18-6-7 15-2.5-6.5z" fill="#fff" stroke="#dfe7ef" stroke-width=".8"/><path d="M10.5 10l9.5-8.5" stroke="#c5d3e1" stroke-width="1"/></svg>
<svg class="a" style="left:1663px;top:966px;" width="22" height="17" viewBox="0 0 22 17"><rect x="2.5" y="1" width="4" height="15" fill="#d8d8d8"/><path d="M2.5 3h2M2.5 6h2M2.5 9h2M2.5 12h2" stroke="#999" stroke-width=".8"/><rect x="13" y="1" width="3" height="15" fill="#fff"/><rect x="13" y="1" width="3" height="3" fill="#bbb"/></svg>
<div class="a" style="left:1694px;top:964px;width:1.5px;height:22px;background:#8d8d8d;"></div>
<div class="t" style="left:1709.00px;top:968.65px;font-size:14px;line-height:14px;color:#555;letter-spacing:0.203px;">–</div>
<div class="t" style="left:1735.00px;top:968.15px;font-size:14px;line-height:14px;color:#525252;letter-spacing:-0.221px;">100 %</div>
<div class="t" style="left:1790.50px;top:968.15px;font-size:14px;line-height:14px;color:#555;letter-spacing:1.312px;">+</div>
<div class="a" style="left:0px;top:999px;width:1820px;height:23px;background:#f0f0f0;"></div>
<div class="t" style="left:4.20px;top:1005.47px;font-size:11.5px;line-height:11.5px;color:#444;letter-spacing:-0.037px;">Online-Betrieb</div>
<div class="a" style="left:0px;top:1022px;width:1820px;height:2px;background:#2b2f36;"></div>
<div class="a" style="left:45px;top:1022px;width:326px;height:2px;background:#e4e4e4;"></div>
<div class="a" style="left:1070px;top:1022px;width:45px;height:2px;background:#8a8a8a;"></div>
<div class="a" style="left:0px;top:999px;width:1px;height:23px;background:#5b9bd5;"></div>
<div class="a" style="left:1656px;top:1003px;width:1px;height:16px;background:#b8b8b8;"></div>
<svg class="a" style="left:1661px;top:1003px;" width="18" height="16" viewBox="0 0 18 16"><rect x="1" y="1" width="16" height="14" fill="#fff" stroke="#888" stroke-width="1"/><rect x="1.5" y="1.5" width="15" height="2.5" fill="#a9c3dc"/><path d="M1 8h16M1 11.5h16M8 4v4" stroke="#888" stroke-width=".9"/></svg>
<svg class="a" style="left:1689px;top:1002px;" width="18" height="18" viewBox="0 0 18 18"><path d="M1.5 6l4.5-5 3.5 3.5-5 4.5z" fill="#bbb" stroke="#888" stroke-width=".8"/><path d="M6.5 6.5l10 10" stroke="#999" stroke-width="2.2" stroke-linecap="round"/></svg>
<svg class="a" style="left:1713px;top:1002px;" width="13" height="18" viewBox="0 0 13 18"><path d="M1 1h11v16l-5.5-4-5.5 4z" fill="#fff" stroke="#888" stroke-width="1"/><path d="M6.5 4.5l.9 1.9 2 .2-1.5 1.4.4 2-1.8-1-1.8 1 .4-2-1.5-1.4 2-.2z" fill="#e6c86a"/></svg>
<div class="t" style="left:1741.00px;top:1005.84px;font-size:12px;line-height:12px;color:#555;letter-spacing:1.000px;">-</div>
<div class="t" style="left:1761.00px;top:1005.34px;font-size:12px;line-height:12px;color:#525252;letter-spacing:-0.906px;">130 %</div>
<div class="t" style="left:1804.00px;top:1005.34px;font-size:12px;line-height:12px;color:#555;letter-spacing:0.984px;">+</div>
<svg class="a" style="left:360px;top:355px;" width="80" height="80" viewBox="0 0 80 80"><defs><filter id="sh" x="-50%" y="-50%" width="200%" height="200%"><feGaussianBlur stdDeviation="2.2"/></filter></defs><ellipse cx="38" cy="40.5" rx="21" ry="19.3" fill="none" stroke="#8a8a8a" stroke-width="4" opacity=".55" filter="url(#sh)"/><ellipse cx="35.7" cy="36.9" rx="20.6" ry="18.8" fill="#efefef" stroke="#f23a3a" stroke-width="2.9"/><ellipse cx="35.7" cy="37.5" rx="16" ry="14.5" fill="none" stroke="#dadada" stroke-width="1.2"/><circle cx="34.7" cy="32.2" r="6.6" fill="#f4f4f4" stroke="#c9c9c9" stroke-width="1.3"/><path d="M39.5 37l5.2 5.2" stroke="#c9c9c9" stroke-width="1.6"/></svg>
<div class="a" style="left:536px;top:412px;width:627px;height:395px;background:#efefef;border:1px solid #7a7a7a;box-sizing:border-box;"></div>
<div class="a" style="left:537px;top:413px;width:625px;height:26px;background:#ffffff;"></div>
<div class="a" style="left:537px;top:439px;width:625px;height:1px;background:#a0a0a0;"></div>
<svg class="a" style="left:543px;top:418px;" width="14" height="14" viewBox="0 0 14 14"><g transform="scale(0.4516)"><rect x="0.3" y="0.3" width="30.4" height="30.4" rx="5.5" fill="#0a4f9c"/><circle cx="15.4" cy="15.6" r="9.3" fill="#fff"/><path d="M10.4 15.4C12 12.3 17.2 11.6 22.6 16.8A7.3 7.3 0 0 1 16.6 22.8C14.4 21.3 12.6 19.2 12.6 16.8C12.6 15.6 11.4 15 10.4 15.4Z" fill="#0a4f9c"/></g></svg>
<div class="t" style="left:561.80px;top:420.91px;font-size:10.5px;line-height:10.5px;color:#222;letter-spacing:-0.419px;">Branchen</div>
<div class="a" style="left:1060px;top:425px;width:9.5px;height:1px;background:#d8d8d8;"></div>
<svg class="a" style="left:1098px;top:420px;" width="11" height="11" viewBox="0 0 11 11"><rect x="1.5" y="1.5" width="8" height="8" fill="none" stroke="#333" stroke-width="1.3"/></svg>
<svg class="a" style="left:1137.5px;top:420px;" width="11" height="11" viewBox="0 0 11 11"><path d="M1 1l9 9M10 1l-9 9" stroke="#333" stroke-width="1.2"/></svg>
<svg class="a" style="left:586.7px;top:441.1px;" width="25" height="25" viewBox="0 0 25 25"><circle cx="12.5" cy="12.5" r="10.8" fill="#fff" stroke="#9d9d9d" stroke-width="1.5"/><path d="M8 8l9 9M17 8l-9 9" stroke="#e2606c" stroke-width="1.2"/></svg>
<svg class="a" style="left:837.1px;top:440.9px;" width="25" height="25" viewBox="0 0 25 25"><circle cx="12.5" cy="12.5" r="10.8" fill="#fff" stroke="#bdbdbd" stroke-width="1.5"/><path d="M7.5 13l3.5 3.8 6.8-8" fill="none" stroke="#86cf93" stroke-width="1.4"/></svg>
<svg class="a" style="left:1087.3px;top:440.9px;" width="25" height="25" viewBox="0 0 25 25"><circle cx="12.5" cy="12.5" r="10.8" fill="#fff" stroke="#9d9d9d" stroke-width="1.5"/><path d="M12.5 7v11M7 12.5h11" stroke="#3aa757" stroke-width="1.8"/></svg>
<div class="a" style="left:537px;top:468px;width:625px;height:34px;background:#5a8dbb;"></div>
<div class="t" style="left:544.40px;top:479.75px;font-size:14px;line-height:14px;color:#ffffff;font-weight:700;letter-spacing:-0.410px;">Branchen</div>
<div class="t" style="left:544.00px;top:512.99px;font-size:11px;line-height:11px;color:#555;letter-spacing:-0.126px;">Ihre Eingabe (Branche):</div>
<div class="a" style="left:664.5px;top:509.5px;width:477px;height:17px;background:#ffffff;border:1px solid #c3d3e3;box-sizing:border-box;"></div>
<div class="a" style="left:668px;top:512px;width:1px;height:11px;background:#444;"></div>
<svg class="a" style="left:1143.5px;top:510px;" width="15" height="15" viewBox="0 0 15 15"><rect x=".5" y=".5" width="14" height="14" fill="#fafafa" stroke="#d6dde6" stroke-width="1"/><path d="M7.5 2v11M2 7.5h11" stroke="#6f93b8" stroke-width="1.1"/><path d="M5.8 3.5l1.7-1.7 1.7 1.7M5.8 11.5l1.7 1.7 1.7-1.7M3.5 5.8l-1.7 1.7 1.7 1.7M11.5 5.8l1.7 1.7-1.7 1.7" fill="none" stroke="#6f93b8" stroke-width="1.1"/></svg>
<div class="a" style="left:538.5px;top:533.5px;width:621px;height:252px;background:#ffffff;border:1px solid #d0d0d0;box-sizing:border-box;"></div>
<div class="a" style="left:539.5px;top:534.5px;width:248px;height:26px;background:#eeeeee;"></div>
<div class="a" style="left:787.5px;top:534.5px;width:355.5px;height:52.5px;background:#eeeeee;"></div>
<div class="a" style="left:539.5px;top:560.5px;width:248px;height:1px;background:#d6d6d6;"></div>
<div class="a" style="left:539.5px;top:561.5px;width:248px;height:25.5px;background:#eeeeee;"></div>
<div class="a" style="left:539.5px;top:586.5px;width:603.5px;height:1px;background:#d0d0d0;"></div>
<div class="a" style="left:787px;top:534.5px;width:1px;height:250px;background:#dedede;"></div>
<div class="t" style="left:542.50px;top:543.39px;font-size:11px;line-height:11px;color:#555;letter-spacing:-0.283px;">Branche</div>
<svg class="a" style="left:777px;top:538px;" width="7" height="5" viewBox="0 0 7 5"><path d="M0.5 4.5l3-3.5 3 3.5z" fill="#555"/></svg>
<div class="t" style="left:544.00px;top:569.09px;font-size:11px;line-height:11px;color:#555;letter-spacing:-0.272px;">wie</div>
<svg class="a" style="left:566px;top:573px;" width="6" height="4" viewBox="0 0 6 4"><path d="M0 0h6l-3 3.5z" fill="#888"/></svg>
<div class="a" style="left:576px;top:565px;width:208px;height:19px;background:#ffffff;"></div>
<div class="a" style="left:539.5px;top:587.0px;width:603.5px;height:20.65px;background:#ffffff;"></div>
<div class="t" style="left:544.40px;top:593.09px;font-size:11px;line-height:11px;color:#505050;width:241px;overflow:hidden;">Automobilhersteller</div>
<div class="a" style="left:539.5px;top:607.65px;width:603.5px;height:20.65px;background:#eeeeee;"></div>
<div class="a" style="left:539.5px;top:607.65px;width:603.5px;height:1px;background:#e6e6e6;"></div>
<div class="t" style="left:544.40px;top:613.74px;font-size:11px;line-height:11px;color:#505050;width:241px;overflow:hidden;">Baugewerbe</div>
<div class="a" style="left:539.5px;top:628.3px;width:603.5px;height:20.65px;background:#ffffff;"></div>
<div class="a" style="left:539.5px;top:628.3px;width:603.5px;height:1px;background:#e6e6e6;"></div>
<div class="t" style="left:544.40px;top:634.39px;font-size:11px;line-height:11px;color:#505050;width:241px;overflow:hidden;">Bergbau und Gewinnung von Steinen und Erden</div>
<div class="a" style="left:539.5px;top:648.95px;width:603.5px;height:20.65px;background:#eeeeee;"></div>
<div class="a" style="left:539.5px;top:648.95px;width:603.5px;height:1px;background:#e6e6e6;"></div>
<div class="t" style="left:544.40px;top:655.04px;font-size:11px;line-height:11px;color:#505050;width:241px;overflow:hidden;">Energieversorgung</div>
<div class="a" style="left:539.5px;top:669.6px;width:603.5px;height:20.65px;background:#ffffff;"></div>
<div class="a" style="left:539.5px;top:669.6px;width:603.5px;height:1px;background:#e6e6e6;"></div>
<div class="t" style="left:544.40px;top:675.69px;font-size:11px;line-height:11px;color:#505050;width:241px;overflow:hidden;">Erbringung von Finanz- und Versicherungsdienstleistungen</div>
<div class="a" style="left:539.5px;top:690.25px;width:603.5px;height:20.65px;background:#eeeeee;"></div>
<div class="a" style="left:539.5px;top:690.25px;width:603.5px;height:1px;background:#e6e6e6;"></div>
<div class="t" style="left:544.40px;top:696.34px;font-size:11px;line-height:11px;color:#505050;width:241px;overflow:hidden;">Erbringung von Freiberuflichen, Wissenschaftlichen</div>
<div class="a" style="left:539.5px;top:710.9px;width:603.5px;height:20.65px;background:#ffffff;"></div>
<div class="a" style="left:539.5px;top:710.9px;width:603.5px;height:1px;background:#e6e6e6;"></div>
<div class="t" style="left:544.40px;top:716.99px;font-size:11px;line-height:11px;color:#505050;width:241px;overflow:hidden;">Erbringung von sonstigen Dienstleistungen</div>
<div class="a" style="left:539.5px;top:731.55px;width:603.5px;height:20.65px;background:#eeeeee;"></div>
<div class="a" style="left:539.5px;top:731.55px;width:603.5px;height:1px;background:#e6e6e6;"></div>
<div class="t" style="left:544.40px;top:737.64px;font-size:11px;line-height:11px;color:#505050;width:241px;overflow:hidden;">Erbringung von sonstigen wirtschaftlichen Dienstleistungen</div>
<div class="a" style="left:539.5px;top:752.2px;width:603.5px;height:20.65px;background:#ffffff;"></div>
<div class="a" style="left:539.5px;top:752.2px;width:603.5px;height:1px;background:#e6e6e6;"></div>
<div class="t" style="left:544.40px;top:758.29px;font-size:11px;line-height:11px;color:#505050;width:241px;overflow:hidden;">Erziehung und Unterricht</div>
<div class="a" style="left:539.5px;top:772.85px;width:603.5px;height:10.649999999999977px;background:#eeeeee;"></div>
<div class="a" style="left:539.5px;top:772.85px;width:603.5px;height:1px;background:#e6e6e6;"></div>
<div class="t" style="left:544.40px;top:778.94px;font-size:11px;line-height:11px;color:#505050;width:241px;overflow:hidden;height:4.6px;">Exterritoriale Organisationen und Körperschaften</div>
<div class="a" style="left:1143px;top:534.5px;width:15px;height:249px;background:#ffffff;"></div>
<svg class="a" style="left:1146px;top:538px;" width="9" height="6" viewBox="0 0 9 6"><path d="M0.5 5l4-4 4 4z" fill="#aaa"/></svg>
<div class="a" style="left:1146.2px;top:550.3px;width:8.4px;height:97.5px;background:#b3b3b3;"></div>
<svg class="a" style="left:1146px;top:772px;" width="9" height="6" viewBox="0 0 9 6"><path d="M0.5 1l4 4 4-4z" fill="#888"/></svg>
<div class="a" style="left:537px;top:786px;width:625px;height:1px;background:#cfcfcf;"></div>
<div class="t" style="left:541.60px;top:791.69px;font-size:11px;line-height:11px;color:#555;letter-spacing:-0.434px;">21 Datensätze</div>
<div class="a" style="left:1082.5px;top:790px;width:1px;height:14px;background:#d0d0d0;"></div>
<div class="t" style="left:1092.50px;top:792.19px;font-size:11px;line-height:11px;color:#555;letter-spacing:-0.125px;">–</div>
<div class="t" style="left:1110.00px;top:791.69px;font-size:11px;line-height:11px;color:#555;letter-spacing:-0.675px;">110 %</div>
<div class="t" style="left:1148.00px;top:791.69px;font-size:11px;line-height:11px;color:#555;letter-spacing:1.562px;">+</div>
<div class="a" style="left:787px;top:587px;width:1px;height:196.5px;background:#e3e3e3;"></div>
<svg class="a" style="left:360px;top:355px;" width="210" height="120" viewBox="0 0 210 120"><defs><filter id="sh2" x="-20%" y="-20%" width="140%" height="140%"><feGaussianBlur stdDeviation="1.5"/></filter></defs><g opacity=".35" filter="url(#sh2)"><circle cx="62.00" cy="52.20" r="1.6" fill="#777"/><circle cx="67.14" cy="54.36" r="1.6" fill="#777"/><circle cx="72.28" cy="56.52" r="1.6" fill="#777"/><circle cx="77.42" cy="58.68" r="1.6" fill="#777"/><circle cx="82.56" cy="60.84" r="1.6" fill="#777"/><circle cx="87.70" cy="63.00" r="1.6" fill="#777"/><circle cx="92.84" cy="65.16" r="1.6" fill="#777"/><circle cx="97.98" cy="67.32" r="1.6" fill="#777"/><circle cx="103.12" cy="69.48" r="1.6" fill="#777"/><circle cx="108.26" cy="71.64" r="1.6" fill="#777"/><circle cx="113.40" cy="73.80" r="1.6" fill="#777"/><circle cx="118.54" cy="75.96" r="1.6" fill="#777"/><circle cx="123.68" cy="78.12" r="1.6" fill="#777"/><circle cx="128.82" cy="80.28" r="1.6" fill="#777"/><circle cx="133.96" cy="82.44" r="1.6" fill="#777"/><circle cx="139.10" cy="84.60" r="1.6" fill="#777"/><circle cx="144.24" cy="86.76" r="1.6" fill="#777"/><circle cx="149.38" cy="88.92" r="1.6" fill="#777"/><circle cx="154.52" cy="91.08" r="1.6" fill="#777"/><circle cx="159.66" cy="93.24" r="1.6" fill="#777"/><circle cx="164.80" cy="95.40" r="1.6" fill="#777"/><circle cx="169.94" cy="97.56" r="1.6" fill="#777"/><circle cx="175.08" cy="99.72" r="1.6" fill="#777"/><circle cx="180.22" cy="101.88" r="1.6" fill="#777"/><circle cx="185.36" cy="104.04" r="1.6" fill="#777"/><circle cx="190.50" cy="106.20" r="1.6" fill="#777"/><path d="M189.5 110.1L192.7 102.7L198.5 109.5z" fill="#777"/></g><circle cx="60.50" cy="49.20" r="1.6" fill="#f03535"/><circle cx="65.64" cy="51.36" r="1.6" fill="#f03535"/><circle cx="70.78" cy="53.52" r="1.6" fill="#f03535"/><circle cx="75.92" cy="55.68" r="1.6" fill="#f03535"/><circle cx="81.06" cy="57.84" r="1.6" fill="#f03535"/><circle cx="86.20" cy="60.00" r="1.6" fill="#f03535"/><circle cx="91.34" cy="62.16" r="1.6" fill="#f03535"/><circle cx="96.48" cy="64.32" r="1.6" fill="#f03535"/><circle cx="101.62" cy="66.48" r="1.6" fill="#f03535"/><circle cx="106.76" cy="68.64" r="1.6" fill="#f03535"/><circle cx="111.90" cy="70.80" r="1.6" fill="#f03535"/><circle cx="117.04" cy="72.96" r="1.6" fill="#f03535"/><circle cx="122.18" cy="75.12" r="1.6" fill="#f03535"/><circle cx="127.32" cy="77.28" r="1.6" fill="#f03535"/><circle cx="132.46" cy="79.44" r="1.6" fill="#f03535"/><circle cx="137.60" cy="81.60" r="1.6" fill="#f03535"/><circle cx="142.74" cy="83.76" r="1.6" fill="#f03535"/><circle cx="147.88" cy="85.92" r="1.6" fill="#f03535"/><circle cx="153.02" cy="88.08" r="1.6" fill="#f03535"/><circle cx="158.16" cy="90.24" r="1.6" fill="#f03535"/><circle cx="163.30" cy="92.40" r="1.6" fill="#f03535"/><circle cx="168.44" cy="94.56" r="1.6" fill="#f03535"/><circle cx="173.58" cy="96.72" r="1.6" fill="#f03535"/><circle cx="178.72" cy="98.88" r="1.6" fill="#f03535"/><circle cx="183.86" cy="101.04" r="1.6" fill="#f03535"/><circle cx="189.00" cy="103.20" r="1.6" fill="#f03535"/><path d="M188 107.1L191.2 99.7L197 106.5z" fill="#f03535"/></svg>
</body></html>
